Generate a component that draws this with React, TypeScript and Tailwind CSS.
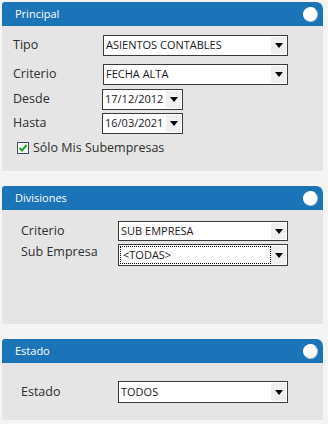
import React from 'react';

const font = { fontFamily: '"Open Sans", "Noto Sans", sans-serif' };

const Arrow = () => (
  <div className="w-[15px] self-stretch bg-[#efefef] flex items-center justify-center">
    <svg width="8" height="5" viewBox="0 0 8 5">
      <path d="M0 0 H8 L4 5 Z" fill="#000" />
    </svg>
  </div>
);

const Select = ({ value, w, h = 21, focus = false }: { value: string; w: number; h?: number; focus?: boolean }) => (
  <div
    className="flex bg-white border border-[#3a3a3a] p-[1px] text-[11px] text-[#1a1a1a]"
    style={{ width: w, height: h }}
  >
    <div className={`flex-1 flex items-center pl-[1px] ${focus ? 'border border-dotted border-black pl-[2px]' : ''}`}>
      {value}
    </div>
    <Arrow />
  </div>
);

const Header = ({ title }: { title: string }) => (
  <div className="h-[24px] bg-[#1c74b8] rounded-tl-[3px] rounded-tr-[7px] flex items-center justify-between pl-[13px] pr-[5px]">
    <span className="text-white text-[11px]">{title}</span>
    <div className="w-[15px] h-[15px] rounded-full bg-white border border-[#b9c9d9] border-t-white border-l-white" />
  </div>
);

export default function App() {
  return (
    <div className="w-[328px] h-[424px] bg-[#f4f4f4] pt-[2px] pl-[2px] text-[#2e2e2e]" style={font}>
      {/* Principal */}
      <div className="w-[321px] h-[169px] bg-[#e5e5e5] rounded-t-[3px]">
        <Header title="Principal" />
        <div className="pt-[9px] pl-[11px] text-[12.5px]">
          <div className="flex items-center h-[21px]">
            <span className="w-[90px]">Tipo</span>
            <Select value="ASIENTOS CONTABLES" w={185} />
          </div>
          <div className="flex items-center h-[21px] mt-[8px]">
            <span className="w-[90px]">Criterio</span>
            <Select value="FECHA ALTA" w={185} />
          </div>
          <div className="flex items-center h-[21px] mt-[4px]">
            <span className="w-[89px]">Desde</span>
            <Select value="17/12/2012" w={81} />
          </div>
          <div className="flex items-center h-[21px] mt-[3px]">
            <span className="w-[89px]">Hasta</span>
            <Select value="16/03/2021" w={81} />
          </div>
          <div className="flex items-center mt-[5px] pl-[4px] gap-[4px]">
            <svg width="12" height="12" viewBox="0 0 12 12">
              <rect x="0.5" y="0.5" width="11" height="11" fill="#fff" stroke="#3d4a5a" />
              <path d="M2.5 6 L5 8.5 L9.5 3" fill="none" stroke="#1aa02a" strokeWidth="2" />
            </svg>
            <span>Sólo Mis Subempresas</span>
          </div>
        </div>
      </div>

      {/* Divisiones */}
      <div className="w-[321px] h-[138px] bg-[#e5e5e5] rounded-t-[3px] mt-[15px]">
        <Header title="Divisiones" />
        <div className="pt-[11px] pl-[19px] text-[12.5px]">
          <div className="flex items-center h-[20px]">
            <span className="w-[97px]">Criterio</span>
            <Select value="SUB EMPRESA" w={170} h={20} />
          </div>
          <div className="flex items-start h-[22px] mt-[3px]">
            <span className="w-[97px] -mt-[1px]">Sub Empresa</span>
            <Select value="<TODAS>" w={170} h={22} focus />
          </div>
        </div>
      </div>

      {/* Estado */}
      <div className="w-[321px] h-[81px] bg-[#e5e5e5] rounded-t-[3px] mt-[15px]">
        <Header title="Estado" />
        <div className="pt-[18px] pl-[19px] text-[12.5px]">
          <div className="flex items-center h-[22px]">
            <span className="w-[97px]">Estado</span>
            <Select value="TODOS" w={170} h={22} />
          </div>
        </div>
      </div>
    </div>
  );
}
